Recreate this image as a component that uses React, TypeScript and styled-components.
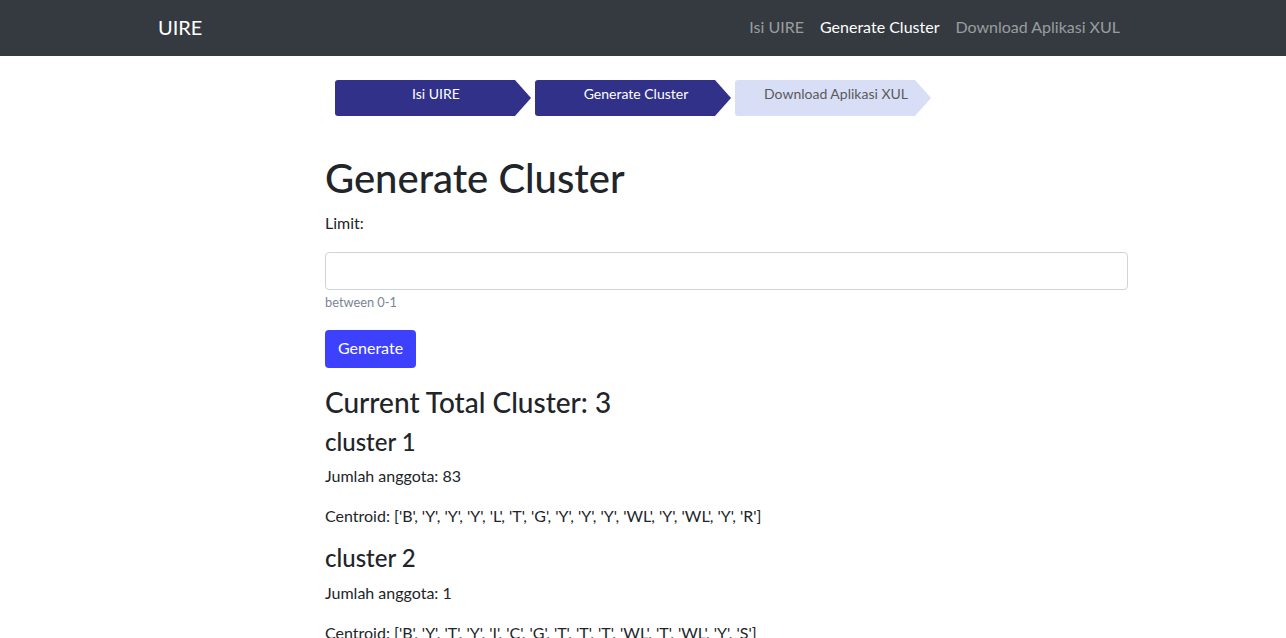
import styled, { createGlobalStyle } from "styled-components";

const GlobalStyle = createGlobalStyle`
    body {
        margin: 0;
        font-family: Lato, "Open Sans", sans-serif;
        font-size: 16px;
        line-height: 1.5;
        color: #212529;
        background: #fff;
    }
    * { box-sizing: border-box; }
`

const Navbar = styled.nav`
    height: 56px;
    background: #343a40;
`

const NavInner = styled.div`
    width: 970px;
    height: 100%;
    margin: 0 auto;
    padding-bottom: 2px;
    display: flex;
    align-items: center;
    justify-content: space-between;
`

const Brand = styled.div`
    font-size: 20px;
    color: #fff;
    line-height: 30px;
`

const NavLinks = styled.div`
    display: flex;
`

const NavLink = styled.a<{ $active?: boolean }>`
    padding: 8px 8px;
    color: ${props => props.$active ? "#fff" : "rgba(255,255,255,.5)"};
    text-decoration: none;
    font-size: 16px;
`

const Page = styled.div`
    width: 970px;
    margin: 0 auto;
`

const Main = styled.main`
    margin-left: 167px;
    padding-top: 24px;
`

const Steps = styled.div`
    display: flex;
    gap: 4px;
    margin-left: 10px;
`

const Step = styled.div<{ $done?: boolean }>`
    width: 196px;
    height: 36px;
    padding: 3px 0 0 6px;
    text-align: center;
    font-size: 14px;
    line-height: 21px;
    border-radius: 3px 0 0 3px;
    background: ${props => props.$done ? "#31318a" : "#d8def6"};
    color: ${props => props.$done ? "#fff" : "#5a5a5a"};
    clip-path: polygon(0 0, 180px 0, 196px 50%, 180px 100%, 0 100%);
`

const Title = styled.h1`
    margin: 38px 0 9px;
    font-size: 40px;
    font-weight: 500;
    line-height: 1.2;
`

const Label = styled.label`
    display: block;
    margin-bottom: 17px;
`

const Input = styled.input`
    display: block;
    width: 100%;
    height: 38px;
    padding: 6px 12px;
    font-size: 16px;
    border: 1px solid #ced4da;
    border-radius: 4px;
    outline: none;
`

const Help = styled.small`
    display: block;
    margin-top: 3px;
    font-size: 12.8px;
    line-height: 19px;
    color: #7a8595;
`

const Btn = styled.button`
    margin-top: 18px;
    height: 38px;
    padding: 5px 13px 7px;
    font-family: inherit;
    font-size: 16px;
    line-height: 24px;
    color: #fff;
    background: #3d41fe;
    border: none;
    border-radius: 4px;
`

const Total = styled.h3`
    margin: 18px 0 8px;
    font-size: 28px;
    font-weight: 500;
    line-height: 1.2;
`

const ClusterTitle = styled.h4`
    margin: 0 0 8px;
    font-size: 24px;
    font-weight: 500;
    line-height: 1.2;
`

const Text = styled.p`
    margin: 0 0 16px;
`

const clusters = [
    { name: "cluster 1", count: 83, centroid: "['B', 'Y', 'Y', 'Y', 'L', 'T', 'G', 'Y', 'Y', 'Y', 'WL', 'Y', 'WL', 'Y', 'R']" },
    { name: "cluster 2", count: 1, centroid: "['B', 'Y', 'T', 'Y', 'I', 'C', 'G', 'T', 'T', 'T', 'WL', 'T', 'WL', 'Y', 'S']" },
]

function App() {
    return (
        <>
            <GlobalStyle />
            <Navbar>
                <NavInner>
                    <Brand>UIRE</Brand>
                    <NavLinks>
                        <NavLink>Isi UIRE</NavLink>
                        <NavLink $active>Generate Cluster</NavLink>
                        <NavLink>Download Aplikasi XUL</NavLink>
                    </NavLinks>
                </NavInner>
            </Navbar>
            <Page>
                <Main>
                    <Steps>
                        <Step $done>Isi UIRE</Step>
                        <Step $done>Generate Cluster</Step>
                        <Step>Download Aplikasi XUL</Step>
                    </Steps>
                    <Title>Generate Cluster</Title>
                    <Label>Limit:</Label>
                    <Input type="text" />
                    <Help>between 0-1</Help>
                    <Btn>Generate</Btn>
                    <Total>Current Total Cluster: 3</Total>
                    {clusters.map(c => (
                        <div key={c.name}>
                            <ClusterTitle>{c.name}</ClusterTitle>
                            <Text>Jumlah anggota: {c.count}</Text>
                            <Text>Centroid: {c.centroid}</Text>
                        </div>
                    ))}
                </Main>
            </Page>
        </>
    )
}

export default App;
